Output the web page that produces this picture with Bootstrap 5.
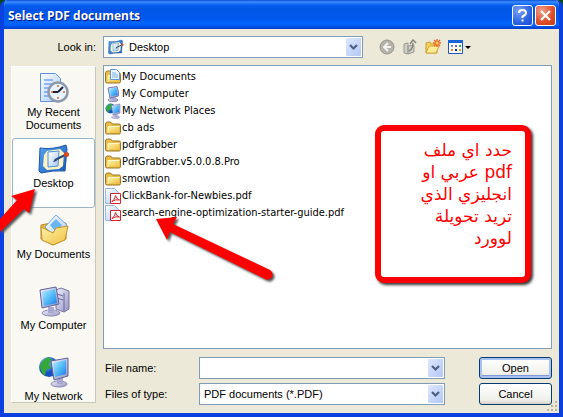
<!DOCTYPE html>
<html lang="en">
<head>
<meta charset="utf-8">
<meta name="viewport" content="width=device-width, initial-scale=1">
<title>Select PDF documents</title>
<link href="https://cdn.jsdelivr.net/npm/bootstrap@5.3.0/dist/css/bootstrap.min.css" rel="stylesheet">
<style>
  body { font: 11px/13px "Liberation Sans", Arial, sans-serif; color: #000; background: #0a4a10; }
  .dialog { border: solid #0a3fe0; border-width: 0 4px 4px; border-radius: 7px 7px 0 0; background: #ece9d8; overflow: hidden; }
  .titlebar { height: 29px; margin: 0 -4px; padding: 2px 7px 0 8px; background: linear-gradient(#0a50d8 0, #3a8cff 2px, #0860f0 5px, #0055e5 9px, #0058ec 18px, #0066ff 24px, #0050e0 27px, #003dd0 29px); }
  .titlebar h1 { font: bold 12px/20px "Open Sans", "Noto Sans", sans-serif; color: #fff; text-shadow: 1px 1px 0 #0a1883; }
  .capbtns { gap: 2px; }
  .capbtn { width: 21px; height: 21px; border: 1px solid #fff; border-radius: 3px; background: radial-gradient(circle at 30% 25%, #7ba2f5, #2c62e4 60%, #1a4bd0); }
  .capbtn.shut { background: radial-gradient(circle at 30% 25%, #f0a088, #e2512c 55%, #c33a14); }
  .toprow { padding-top: 7px; }
  .tools { gap: 7px; margin-left: 16px; }
  .toolbtn { width: 16px; height: 16px; }
  .look-label { width: 99px; padding-right: 7px; }
  .combo { height: 22px; border: 1px solid #7f9db9; border-radius: 0; padding: 0 20px 0 4px; color: #000; appearance: none;
    background: #fff url("data:image/svg+xml,%3Csvg xmlns='http://www.w3.org/2000/svg' width='15' height='18'%3E%3Cdefs%3E%3ClinearGradient id='g' x2='1' y2='1'%3E%3Cstop stop-color='%23dde7ff'/%3E%3Cstop offset='1' stop-color='%23b3c7f5'/%3E%3C/linearGradient%3E%3C/defs%3E%3Crect width='15' height='18' rx='1' fill='url(%23g)'/%3E%3Cpath d='M4 7l3.5 3.5L11 7' fill='none' stroke='%234d6185' stroke-width='2.2'/%3E%3C/svg%3E") no-repeat right 1px center; }
  .look { width: 260px; padding-left: 25px; }
  .look-icon { left: 5px; top: 3px; }
  .panes { padding: 7px 7px 0; gap: 7px; }
  .places { width: 85px; height: 337px; margin-top: 1px; background: #f9f8f3; border: 1px solid; border-color: #fff #c9c7ba #c9c7ba #fff; }
  .place { height: 71px; padding: 5px 0 0; border: 0; background: none; line-height: 13px; color: #000; }
  .place span { padding-top: 2px; }
  .place.current { height: 70px; margin-bottom: 1px; padding-top: 4px; border: 1px solid #98b5c9; border-radius: 3px; background: #fff; }
  .files { height: 284px; border: 1px solid #7f9db9; background: #fff; padding: 2px 1px; }
  .file { height: 17px; border: 0; background: none; padding: 0; gap: 1px; font: 11px/17px "DejaVu Sans Condensed", "DejaVu Sans", sans-serif; color: #000; }
  .field-label { width: 96px; padding-left: 2px; }
  .field { width: 246px; }
  .push { width: 73px; height: 22px; padding: 0; border: 1px solid #003c74; border-radius: 3px; line-height: 18px; background: linear-gradient(#fff, #f0f0ea 80%, #d6d0c5); color: #000; }
  .push.main { box-shadow: inset 0 0 0 2px #a9c0f0, inset 0 -3px 0 #7f98e0; }
  .note { left: 375px; top: 125px; width: 156px; height: 158px; border: 6px solid #f00; border-radius: 9px; background: #fff; box-shadow: 2px 2px 3px #333; padding: 8px 13px 0 8px; font: 17px/22px "DejaVu Sans", sans-serif; color: #f00; }
  .over { pointer-events: none; filter: drop-shadow(2px 2px 1px #555); }
  .grip { right: 1px; bottom: 1px; }
</style>
<script src="https://cdn.jsdelivr.net/npm/bootstrap@5.3.0/dist/js/bootstrap.bundle.min.js"></script>
</head>
<body>
<svg width="0" height="0" class="position-absolute" aria-hidden="true">
  <defs>
    <linearGradient id="gold" x2="1" y2="1"><stop stop-color="#fff3a8"/><stop offset="1" stop-color="#efc044"/></linearGradient>
    <linearGradient id="scr" x2="1" y2="1"><stop stop-color="#b8ecff"/><stop offset=".5" stop-color="#55bdfa"/><stop offset="1" stop-color="#1a78e8"/></linearGradient>
    <linearGradient id="grey" x2="1" y2="1"><stop stop-color="#f2f2fc"/><stop offset="1" stop-color="#9492c0"/></linearGradient>
    <linearGradient id="page" x2="1" y2="1"><stop stop-color="#fff"/><stop offset="1" stop-color="#a9c9f8"/></linearGradient>
    <linearGradient id="blue" x2="1" y2="1"><stop stop-color="#58a8f0"/><stop offset="1" stop-color="#1458b8"/></linearGradient>
    <radialGradient id="earth" cx=".35" cy=".3"><stop stop-color="#8fd0ff"/><stop offset="1" stop-color="#1550c0"/></radialGradient>
    <symbol id="folder" viewBox="0 0 16 16"><path d="M.5 4q0-2 2-2h3l2 2h6.500q1.500 0 1.500 1.500v7q0 1.500-1.500 1.500h-12Q.5 14 .5 12.500z" fill="#e9bd48" stroke="#9c7420"/><path d="M3 6.500h11v6H3z" fill="url(#gold)"/><path d="M3 13V6.500h11.500" fill="none" stroke="#fff8c8"/></symbol>
    <symbol id="desk" viewBox="0 0 32 32"><path d="M2 5q12 2 26-3l1 4-2 22q-12-1-24 2l-2-2z" fill="url(#blue)" stroke="#1c56a8"/><path d="M9 8l13-2 4 4-1 13-4 3-12 1-4-4 1-11z" fill="#fff3c4"/><path d="M10 9l11-1-1 15-10 1z" fill="url(#page)" stroke="#4b91dc"/><path d="M15 19l2-3 2 2z" fill="#236"/><path d="M17 17l10-5" stroke="#2a4a7c" stroke-width="2"/><circle cx="28.500" cy="11.500" r="2.500" fill="#d94a1c"/></symbol>
    <symbol id="pc" viewBox="0 0 32 32"><path d="M18 5l5-2 8 3v18l-5 3-8-3z" fill="url(#grey)" stroke="#7775a5"/><path d="M19 9l6 2M19 13l6 2M26 8v18" stroke="#69679a"/><ellipse cx="13" cy="28" rx="9" ry="3" fill="url(#grey)" stroke="#8b89b8"/><path d="M10 22h6v6h-6z" fill="#aaa8d2"/><path d="M2 5l16-3 3 17-17 4z" fill="url(#grey)" stroke="#5b62a0"/><path d="M4 7l13-3 2 14-13 3z" fill="url(#scr)"/></symbol>
    <symbol id="minipc" viewBox="0 0 16 16"><ellipse cx="8" cy="14" rx="5" ry="1.500" fill="url(#grey)" stroke="#8b89b8"/><path d="M7 11h4v3H7z" fill="#aaa8d2"/><path d="M3 2l9-1.500q2 5 1.500 9.500L5 12z" fill="url(#grey)" stroke="#7478b4"/><path d="M4 3l7.500-1.500q1.200 4 1 7.500L6 10.500z" fill="url(#scr)"/></symbol>
    <symbol id="net" viewBox="0 0 32 32"><circle cx="11" cy="11" r="10" fill="url(#earth)"/><path d="M2 9q4-7 9-8l3 3-3 4 2 4-5 2-1 6q-5-4-5-11z" fill="#35a83a"/><ellipse cx="21" cy="28" rx="8" ry="3" fill="url(#grey)" stroke="#8b89b8"/><path d="M19 22h6v6h-6z" fill="#aaa8d2"/><path d="M13 5l17-3v18l-14 4z" fill="url(#grey)" stroke="#5b62a0"/><path d="M15 7l13-3v14l-11 3z" fill="url(#scr)"/></symbol>
    <symbol id="pdf" viewBox="0 0 16 16"><path d="M.5.5h9l4 4v11H.5z" fill="url(#page)" stroke="#9ab4e2"/><path d="M5.500 5.500h10v10h-10z" fill="#fff" stroke="#d3222a"/><path d="M7 13.500q3-2 3.500-6 1 4 4 4.500-4-1-7.500 1.500" fill="none" stroke="#d3222a"/></symbol>
  </defs>
</svg>
<main class="dialog position-relative min-vh-100">
  <header class="titlebar d-flex align-items-center">
    <h1 class="m-0 flex-grow-1">Select PDF documents</h1>
    <div class="capbtns d-flex">
      <button type="button" class="capbtn p-0 d-flex" aria-label="Help"><svg class="m-auto" width="15" height="15" viewBox="0 0 15 15"><path d="M4 5q0-3 3.500-3T11 5q0 1.500-2 2.500T7.500 10M7.500 11.500v2" fill="none" stroke="#fff" stroke-width="2"/></svg></button>
      <button type="button" class="capbtn shut p-0 d-flex" aria-label="Close"><svg class="m-auto" width="15" height="15" viewBox="0 0 15 15"><path d="M3 3l9 9M12 3l-9 9" stroke="#fff" stroke-width="2.200"/></svg></button>
    </div>
  </header>

  <div class="toprow d-flex align-items-center">
    <label for="look" class="look-label text-end">Look in:</label>
    <div class="position-relative d-flex">
      <select id="look" class="combo look"><option>Desktop</option></select>
      <svg class="look-icon position-absolute" width="16" height="16"><use href="#desk"/></svg>
    </div>
    <div class="tools d-flex align-items-center">
      <button type="button" class="toolbtn p-0 border-0 bg-transparent d-flex" aria-label="Back"><svg width="16" height="16"><circle cx="8" cy="8" r="7" fill="#b4b3ab" stroke="#96958e"/><path d="M9 4L5 8l4 4M5 8h7" fill="none" stroke="#f4f3ee" stroke-width="2"/></svg></button>
      <button type="button" class="toolbtn p-0 border-0 bg-transparent d-flex" aria-label="Up one level"><svg width="16" height="16"><path d="M2 5l4-1v11l-4-1zM6 7l6-1v7l-6 2z" fill="#d0cfc6" stroke="#9c9b93"/><path d="M7 12q4-2 4-8M8 5l3-4 3 3" fill="none" stroke="#85847c" stroke-width="1.500"/></svg></button>
      <button type="button" class="toolbtn p-0 border-0 bg-transparent d-flex" aria-label="New folder"><svg width="16" height="16"><path d="M1 4l4-1 1 2h6v9H1z" fill="#f6d65e" stroke="#c99a2a"/><path d="M1 14l3-7h10l-3 7z" fill="#ffec94" stroke="#d3a53a"/><path d="M12 0v8M8 4h8M9 1l6 6M15 1L9 7" stroke="#f1652a" stroke-width="1.300"/><circle cx="12" cy="4" r="1.500" fill="#ffd34d"/></svg></button>
      <button type="button" class="p-0 border-0 bg-transparent d-flex" aria-label="Views"><svg width="24" height="16"><path d="M.5 1.500h14v13H.5z" fill="#fff" stroke="#1b58c4"/><path d="M0 1h15v3H0z" fill="#1763d8"/><path d="M3 6h2v2H3z" fill="#98c"/><path d="M7 6h2v2H7z" fill="#66c"/><path d="M11 6h2v2h-2z" fill="#3a5"/><path d="M3 10h2v2H3z" fill="#e75"/><path d="M7 10h2v2H7z" fill="#136"/><path d="M11 10h2v2h-2z" fill="#ca2"/><path d="M17 7h6l-3 3z"/></svg></button>
    </div>
  </div>

  <div class="panes d-flex">
    <nav class="places flex-shrink-0 overflow-hidden" aria-label="Places">
      <button type="button" class="place w-100 d-flex flex-column align-items-center"><svg width="32" height="32" class="flex-shrink-0"><path d="M2.500 1.500h15l5 5v23h-20z" fill="url(#page)" stroke="#5d92dc"/><path d="M6 8h9M6 12h9M6 16h6M6 20h6M6 24h6" stroke="#75a5e8" stroke-width="1.500"/><circle cx="20" cy="20" r="9.500" fill="#e8f5ff" stroke="#8c9aac" stroke-width="2.500"/><path d="M20 20l5-5M20 20h-5" stroke="#223" stroke-width="2"/><path d="M20 13v2M20 25v2M13 20h2M25 20h2" stroke="#e5602a" stroke-width="1.500"/></svg><span>My Recent<br>Documents</span></button>
      <button type="button" class="place current w-100 d-flex flex-column align-items-center"><svg width="32" height="32" class="flex-shrink-0"><use href="#desk"/></svg><span>Desktop</span></button>
      <button type="button" class="place w-100 d-flex flex-column align-items-center"><svg width="32" height="32" class="flex-shrink-0"><path d="M3 11l10-2 2 3 13-3v16l-13 6-12-6z" fill="#e8b83c" stroke="#b98a24"/><path d="M7 13L18 1l11 10-11 14z" fill="url(#page)" stroke="#72a4de"/><path d="M18 5l6 6-6 7-6-7z" fill="#6bb6f1"/><path d="M3 13l12 6 3-5 12-2-3 14-12 5-11-5z" fill="url(#gold)" stroke="#c4922a"/></svg><span>My Documents</span></button>
      <button type="button" class="place w-100 d-flex flex-column align-items-center"><svg width="32" height="32" class="flex-shrink-0"><use href="#pc"/></svg><span>My Computer</span></button>
      <button type="button" class="place w-100 d-flex flex-column align-items-center"><svg width="32" height="32" class="flex-shrink-0"><use href="#net"/></svg><span>My Network</span></button>
    </nav>
    <div class="flex-grow-1">
      <div class="files d-flex flex-column align-items-start">
        <button type="button" class="file d-flex align-items-center"><svg width="16" height="16"><use href="#folder"/><path d="M5.500.5h6l3 3v7h-9z" fill="#eef6ff" stroke="#5c97da"/><path d="M7 4h4M7 6h6M7 8h6" stroke="#7fb0ea"/></svg>My Documents</button>
        <button type="button" class="file d-flex align-items-center"><svg width="16" height="16"><use href="#minipc"/></svg>My Computer</button>
        <button type="button" class="file d-flex align-items-center"><svg width="16" height="16"><use href="#net"/></svg>My Network Places</button>
        <button type="button" class="file d-flex align-items-center"><svg width="16" height="16"><use href="#folder"/></svg>cb ads</button>
        <button type="button" class="file d-flex align-items-center"><svg width="16" height="16"><use href="#folder"/></svg>pdfgrabber</button>
        <button type="button" class="file d-flex align-items-center"><svg width="16" height="16"><use href="#folder"/></svg>PdfGrabber.v5.0.0.8.Pro</button>
        <button type="button" class="file d-flex align-items-center"><svg width="16" height="16"><use href="#folder"/></svg>smowtion</button>
        <button type="button" class="file d-flex align-items-center"><svg width="16" height="16"><use href="#pdf"/></svg>ClickBank-for-Newbies.pdf</button>
        <button type="button" class="file d-flex align-items-center"><svg width="16" height="16"><use href="#pdf"/></svg>search-engine-optimization-starter-guide.pdf</button>
      </div>
      <div class="d-flex align-items-center pt-2">
        <label for="fname" class="field-label">File name:</label>
        <input id="fname" class="combo field" type="text">
        <button type="button" class="push main ms-auto">Open</button>
      </div>
      <div class="d-flex align-items-center pt-1">
        <label for="ftype" class="field-label">Files of type:</label>
        <select id="ftype" class="combo field"><option>PDF documents (*.PDF)</option></select>
        <button type="button" class="push ms-auto">Cancel</button>
      </div>
    </div>
  </div>
  <svg class="grip position-absolute" width="11" height="11" aria-hidden="true"><path d="M8 0h2v2H8zM4 4h2v2H4zM8 4h2v2H8zM0 8h2v2H0zM4 8h2v2H4zM8 8h2v2H8z" fill="#b8b4a2"/></svg>
</main>
<aside class="note position-absolute" dir="rtl" lang="ar">حدد اي ملف<br>pdf عربي او<br>انجليزي الذي<br>تريد تحويلة<br>لوورد</aside>
<svg class="over position-absolute top-0 start-0" width="300" height="300" aria-hidden="true"><path d="M156 219l21-2-4 7 97 46q4 3 2 7-3 4-7 2l-95-47-3 8z" fill="#f00"/><path d="M35 189l-24 7 6 4L0 219v13l24-23 5 4z" fill="#f00"/></svg>
</body>
</html>
